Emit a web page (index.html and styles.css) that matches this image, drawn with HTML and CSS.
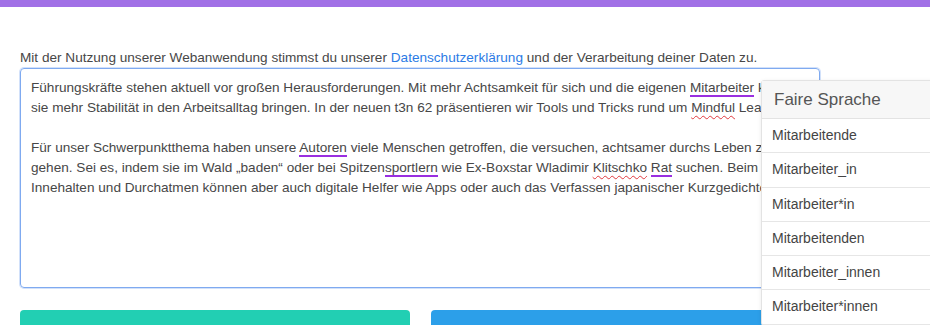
FILE: index.html
```html
<!DOCTYPE html>
<html lang="de">
<head>
<meta charset="utf-8">
<title>Faire Sprache</title>
<link rel="stylesheet" href="styles.css">
</head>
<body>
<div class="topbar"></div>
<main class="main">
  <p class="notice">Mit der Nutzung unserer Webanwendung stimmst du unserer <a class="link" href="#">Datenschutzerklärung</a> und der Verarbeitung deiner Daten zu.</p>
  <div class="editor">
    <p class="para">Führungskräfte stehen aktuell vor großen Herausforderungen. Mit mehr Achtsamkeit für sich und die eigenen <span class="mark">Mitarbeiter</span> können<br>sie mehr Stabilität in den Arbeitsalltag bringen. In der neuen t3n 62 präsentieren wir Tools und Tricks rund um <span class="spell">Mindful</span> Leadership.</p>
    <p class="para">Für unser Schwerpunktthema haben unsere <span class="mark">Autoren</span> viele Menschen getroffen, die versuchen, achtsamer durchs Leben zu<br>gehen. Sei es, indem sie im Wald „baden“ oder bei Spitzen<span class="mark">sportlern</span> wie Ex-Boxstar Wladimir <span class="spell">Klitschko</span> <span class="mark">Rat</span> suchen. Beim<br>Innehalten und Durchatmen können aber auch digitale Helfer wie Apps oder auch das Verfassen japanischer Kurzgedichte helfen.</p>
  </div>
  <div class="actions">
    <button class="btn btn-teal" type="button"></button>
    <button class="btn btn-blue" type="button"></button>
  </div>
  <div class="menu">
    <div class="menu-head">Faire Sprache</div>
    <div class="menu-item">Mitarbeitende</div>
    <div class="menu-item">Mitarbeiter_in</div>
    <div class="menu-item">Mitarbeiter*in</div>
    <div class="menu-item">Mitarbeitenden</div>
    <div class="menu-item">Mitarbeiter_innen</div>
    <div class="menu-item">Mitarbeiter*innen</div>
  </div>
</main>
</body>
</html>
```
FILE: styles.css
```css
html, body {
  margin: 0;
  padding: 0;
  background: #fff;
  overflow: hidden;
  height: 325px;
}
body {
  font-family: "Liberation Sans", Arial, sans-serif;
  font-size: 14px;
  color: #474747;
}
.topbar {
  height: 7px;
  background: #a170e6;
}
.main {
  position: relative;
  width: 800px;
  padding: 41px 110px 0 20px;
}
.notice {
  margin: 0;
  line-height: 20px;
  font-size: 13.6px;
  white-space: nowrap;
}
.link {
  color: #2c7be5;
  text-decoration: none;
}
.editor {
  height: 200px;
  border: 1px solid #7faaf0;
  border-radius: 4px;
  box-shadow: 0 0 0 1px rgba(127, 170, 240, 0.35);
  padding: 9px 10px;
  overflow: hidden;
  line-height: 20px;
  font-size: 13.6px;
}
.para {
  margin: 0 0 20px;
  white-space: nowrap;
}
.mark {
  border-bottom: 2px solid #9a2fe0;
}
.spell {
  text-decoration: underline wavy #e0393e;
  text-decoration-thickness: 1px;
  text-underline-offset: 3px;
}
.actions {
  display: grid;
  grid-template-columns: 1fr 1fr;
  gap: 21px;
  margin-top: 22px;
}
.btn {
  height: 15px;
  border: 0;
  border-radius: 4px 4px 0 0;
}
.btn-teal { background: #22cfb3; }
.btn-blue { background: #2c9fe9; }
.menu {
  position: absolute;
  left: 761px;
  top: 73px;
  width: 200px;
  background: #fff;
  border: 1px solid #e3e3e3;
  border-radius: 3px;
  box-shadow: 0 1px 4px rgba(0, 0, 0, 0.08);
}
.menu-head {
  height: 37px;
  line-height: 37px;
  padding-left: 12px;
  background: #f7f7f7;
  font-size: 17px;
  color: #555;
  border-bottom: 1px solid #e3e3e3;
}
.menu-item {
  height: 33.3px;
  line-height: 33px;
  padding-left: 10px;
  border-bottom: 1px solid #e6e6e6;
  color: #444;
}
```
